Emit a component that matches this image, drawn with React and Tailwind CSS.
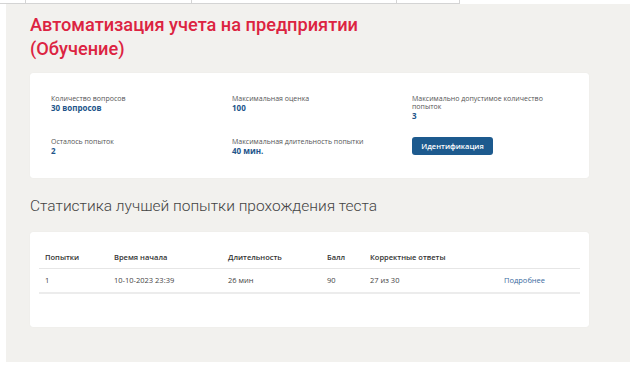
export default function App() {
  const font = { fontFamily: '"Open Sans", "Noto Sans", sans-serif' };
  const rows = [
    { n: "1", start: "10-10-2023 23:39", dur: "26 мин", score: "90", correct: "27 из 30" },
  ];

  return (
    <div className="w-[644px] h-[374px] bg-white overflow-hidden" style={font}>
      {/* top table edge */}
      <div className="flex h-[4px] w-[460px] border-b border-[#d4d4d4]">
        <div className="w-[26px] border-r border-[#d4d4d4]" />
        <div className="w-[166px] border-r border-[#d4d4d4]" />
        <div className="w-[205px] border-r border-[#d4d4d4]" />
        <div className="w-[63px] border-r border-[#d4d4d4]" />
      </div>

      <div className="ml-[6px] w-[624px] h-[358px] bg-[#f2f1ee] pl-[24px] pt-[9px]">
        <h1 className="text-[18.2px] leading-[24px] font-medium text-[#dc2341] font-['Roboto',sans-serif]">
          Автоматизация учета на предприятии
          <br />
          (Обучение)
        </h1>

        {/* info card */}
        <div className="mt-[12px] w-[559px] bg-white rounded-[3px] shadow-[0_0_1px_rgba(0,0,0,0.08)] pl-[21px] pt-[22px] pb-[22px]">
          <div className="grid grid-cols-[181px_180px_140px] gap-y-[16px]">
            <div>
              <div className="text-[7px] leading-[8px] text-[#555]">Количество вопросов</div>
              <div className="text-[8px] leading-[10px] font-bold text-[#22548a]">30 вопросов</div>
            </div>
            <div>
              <div className="text-[7px] leading-[8px] text-[#555]">Максимальная оценка</div>
              <div className="text-[8px] leading-[10px] font-bold text-[#22548a]">100</div>
            </div>
            <div>
              <div className="text-[7px] leading-[8px] text-[#555]">
                Максимально допустимое количество попыток
              </div>
              <div className="text-[8px] leading-[10px] font-bold text-[#22548a]">3</div>
            </div>
            <div className="pt-[1px]">
              <div className="text-[7px] leading-[8px] text-[#555]">Осталось попыток</div>
              <div className="text-[8px] leading-[10px] font-bold text-[#22548a]">2</div>
            </div>
            <div className="pt-[1px]">
              <div className="text-[7px] leading-[8px] text-[#555]">Максимальная длительность попытки</div>
              <div className="text-[8px] leading-[10px] font-bold text-[#22548a]">40 мин.</div>
            </div>
            <div className="flex">
              <button className="block w-[81px] h-[18px] rounded-[3px] bg-[#1d5a8e] text-white text-[7.5px] leading-[18px] font-semibold">
                Идентификация
              </button>
            </div>
          </div>
        </div>

        <h2 className="mt-[17px] text-[15.5px] leading-[22px] font-light text-[#444] font-['Roboto',sans-serif]">
          Статистика лучшей попытки прохождения теста
        </h2>

        {/* stats card */}
        <div className="mt-[15px] w-[559px] h-[95px] bg-white rounded-[3px] shadow-[0_0_1px_rgba(0,0,0,0.08)] px-[9px] pt-[16px]">
          <table className="w-[541px] table-fixed border-collapse text-[7.5px] text-[#444]">
            <colgroup>
              <col className="w-[69px]" />
              <col className="w-[114px]" />
              <col className="w-[99px]" />
              <col className="w-[43px]" />
              <col className="w-[134px]" />
              <col className="w-[82px]" />
            </colgroup>
            <thead>
              <tr className="h-[20px] border-b border-[#e6e6e6] text-left">
                <th className="pl-[6px] font-semibold text-[#333]">Попытки</th>
                <th className="pl-[6px] font-semibold text-[#333]">Время начала</th>
                <th className="pl-[6px] font-semibold text-[#333]">Длительность</th>
                <th className="pl-[6px] font-semibold text-[#333]">Балл</th>
                <th className="pl-[6px] font-semibold text-[#333]">Корректные ответы</th>
                <th />
              </tr>
            </thead>
            <tbody>
              {rows.map((r) => (
                <tr key={r.n} className="h-[25px] border-b-2 border-[#ececec]">
                  <td className="pl-[6px]">{r.n}</td>
                  <td className="pl-[6px]">{r.start}</td>
                  <td className="pl-[6px]">{r.dur}</td>
                  <td className="pl-[6px]">{r.score}</td>
                  <td className="pl-[6px]">{r.correct}</td>
                  <td className="pl-[6px] text-[#3a6b9e]">Подробнее</td>
                </tr>
              ))}
            </tbody>
          </table>
        </div>
      </div>
    </div>
  );
}
